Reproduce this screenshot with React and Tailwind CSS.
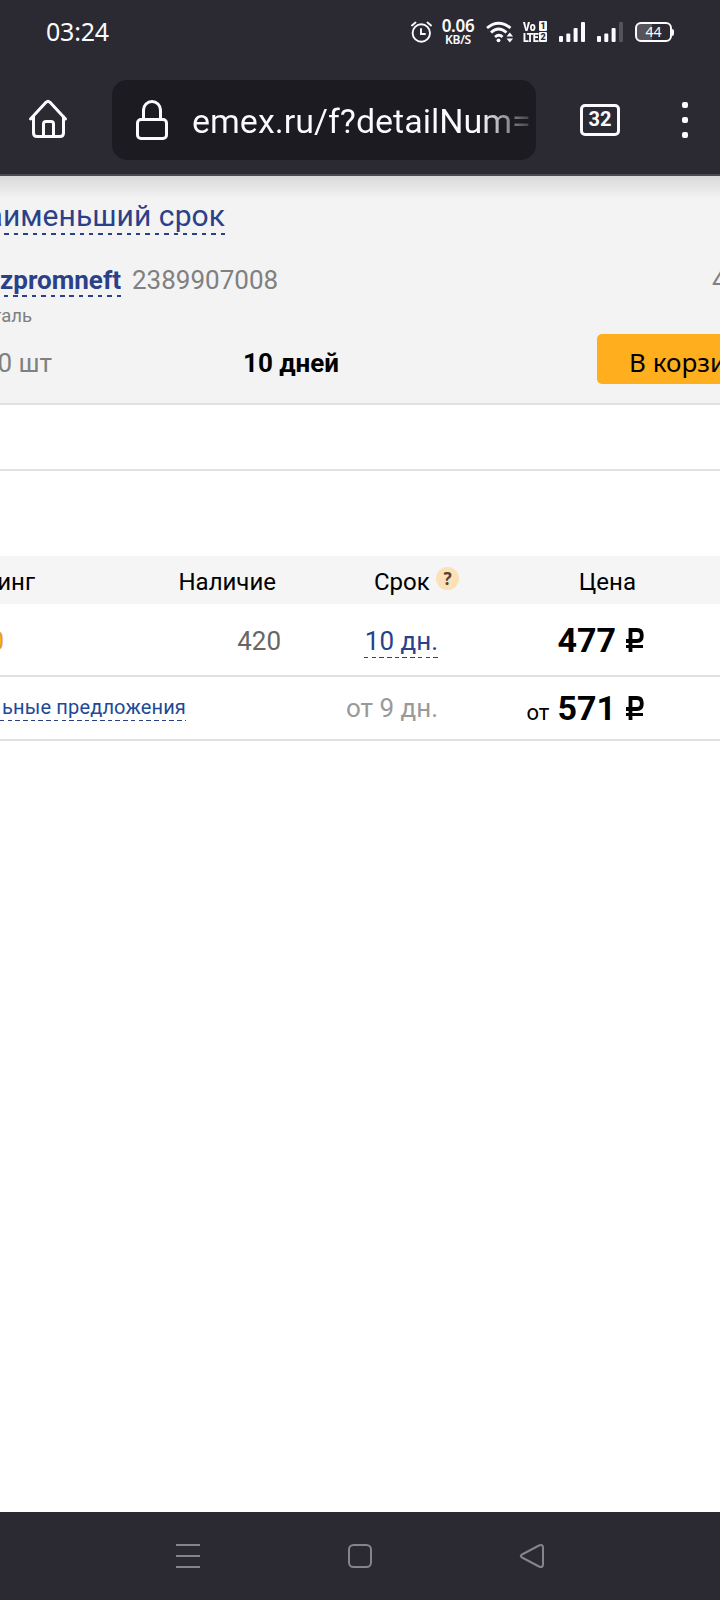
import React from "react";

const Bars = ({ weak }) => (
  <svg width="28" height="24" viewBox="0 0 28 24" fill="#fbfbfe">
    <rect x="0" y="16" width="4" height="6" rx="1" />
    <rect x="7.3" y="13.500" width="4" height="8.500" rx="1" />
    <rect x="14.6" y="8" width="4" height="14" rx="1" />
    <rect x="22" y="2" width="4" height="20" rx="1" opacity={weak ? 0.2 : 1} />
  </svg>
);

const StatusBar = () => (
  <div className="flex h-16 text-[#fbfbfe]">
    <div className="w-[411px] pl-[46px] pt-[15px] font-['Noto_Sans',sans-serif] text-[25px] leading-8 tracking-[-0.2px]">
      03:24
    </div>
    <svg className="mt-[21px]" width="21" height="22" viewBox="0 0 21 22" fill="none" stroke="currentColor" strokeWidth="1.9" strokeLinecap="round">
      <circle cx="10.3" cy="12" r="8.7" />
      <path d="M10 8v5h4M1 4.5l3.5-3M20 4.5l-3.5-3" />
    </svg>
    <div className="ml-2 mt-[17px] w-[36px] text-center font-['Noto_Sans',sans-serif] font-semibold">
      <div className="text-[17px] leading-[18px] tracking-[-0.3px]">0.06</div>
      <div className="-mt-px whitespace-nowrap text-[12px] leading-[12px] tracking-[-0.3px]">KB/S</div>
    </div>
    <svg className="ml-[10px] mt-5" width="30" height="24" viewBox="0 0 30 24" fill="none" stroke="currentColor" strokeWidth="2.8">
      <path d="M1 8q11.500-9.500 23.500 0M5 12.500q7.500-7 15.500 0M9 17q4-3.500 7.500 0" />
      <circle cx="12.5" cy="20.300" r="1.9" fill="currentColor" stroke="none" />
      <path d="M20.500 16.500l3.300-4 3.300 4zM20.500 18.500l3.300 4 3.300-4z" fill="currentColor" stroke="none" />
    </svg>
    <div className="ml-[7px] mt-[21px] flex w-6 justify-between font-['Roboto',sans-serif] font-black">
      <div className="w-[15px] origin-left scale-x-[0.78] text-[13.5px] leading-[11px]">
        <div>Vo</div>
        <div className="tracking-[-1px]">LTE</div>
      </div>
      <div className="w-[8px] text-center text-[9px] leading-[10px] text-[#2b2a33]">
        <div className="rounded-[1px] bg-[#fbfbfe]">1</div>
        <div className="mt-px rounded-[1px] bg-[#fbfbfe]">2</div>
      </div>
    </div>
    <div className="ml-3 mt-5 flex gap-[10px]">
      <Bars />
      <Bars weak />
    </div>
    <div className="ml-[10px] mt-[22px] flex h-5 items-center">
      <div className="h-5 w-[37px] rounded-[6px] border-2 border-[#fbfbfe] bg-linear-to-r from-[#55545c] from-44% to-[#2b2a33] to-44% text-center font-['Noto_Sans',sans-serif] text-[14px] leading-4">
        44
      </div>
      <div className="h-[7px] w-[2px] rounded-r bg-[#fbfbfe]" />
    </div>
  </div>
);

const Toolbar = () => (
  <div className="flex h-[110px] pt-4 text-[#fbfbfe]">
    <svg className="ml-7 mt-[17px]" width="40" height="44" viewBox="0 0 40 44" fill="none" stroke="currentColor" strokeWidth="3" strokeLinecap="round" strokeLinejoin="round">
      <path d="M2.5 22L18 5.3q2-2 4 0L37.500 22M5.500 19.500V36q0 3.500 3.500 3.500h23q3.500 0 3.500-3.500V19.500M15.500 39V27q0-2.500 2.500-2.500h5q2.500 0 2.500 2.500v12" />
    </svg>
    <div className="ml-11 flex h-20 w-[424px] overflow-hidden rounded-[15px] bg-[#1c1b22]">
      <svg className="ml-6 mt-5" width="32" height="40" viewBox="0 0 32 40" fill="none" stroke="currentColor" strokeWidth="3">
        <rect x="1.500" y="19.500" width="29" height="19" rx="3.500" />
        <path d="M7.500 19V10a8.500 8.500 0 0 1 17 0v9" />
      </svg>
      <div className="ml-6 mt-4 w-[344px] whitespace-nowrap bg-linear-to-r from-[#fbfbfe] from-84% to-[#2f2e35] bg-clip-text font-['Roboto',sans-serif] text-[34px] leading-[50px] text-transparent">
        emex.ru/f?detailNum=
      </div>
    </div>
    <div className="ml-11 mt-6 h-8 w-10 rounded-[5px] border-[3px] border-[#fbfbfe] text-center font-['Roboto',sans-serif] text-[20px] font-bold leading-[25px]">
      32
    </div>
    <div className="ml-[62px] mt-[22px] flex flex-col gap-[9px]">
      <div className="size-1.5 rounded-[2px] bg-[#fbfbfe]" />
      <div className="size-1.5 rounded-[2px] bg-[#fbfbfe]" />
      <div className="size-1.5 rounded-[2px] bg-[#fbfbfe]" />
    </div>
  </div>
);

const Dashes = () => (
  <div className="h-[2px] bg-[repeating-linear-gradient(to_left,#2a4189_0_4.500px,transparent_4.500px_9.400px)]" />
);

const ThinDashes = () => (
  <div className="h-px bg-[repeating-linear-gradient(to_right,#2a4189_0_4.500px,transparent_4.500px_7.700px)]" />
);

const BestOffer = () => (
  <div className="h-[229px] overflow-hidden border-b-2 border-[#e1e1e1] bg-linear-to-b from-[#d9d9d9] to-[#f3f3f3] to-10% whitespace-nowrap text-[26px] text-[#808080]">
    <div className="h-[59px] w-[225px] text-[#2a4189]">
      <div className="flex h-[57px] justify-end pt-[22px] text-[30px] leading-9 tracking-[0.06px]">аименьший срок</div>
      <Dashes />
    </div>
    <div className="flex h-[62px] leading-8">
      <div className="w-[121px] text-[#2a4189]">
        <div className="flex h-[60px] justify-end pt-[29px] font-bold">zpromneft</div>
        <Dashes />
      </div>
      <div className="ml-[11px] w-[580px] pt-[29px]">2389907008</div>
      <div className="w-2 pt-[29px]">4</div>
    </div>
    <div className="flex h-[36px] w-8 justify-end pt-[7px] text-[18.5px] leading-6">таль</div>
    <div className="flex h-[51px] pt-px">
      <div className="flex w-[52px] shrink-0 justify-end pt-[13px] leading-8">0 шт</div>
      <div className="ml-[191px] w-[354px] shrink-0 pt-[13px] font-bold leading-8 text-black">10 дней</div>
      <div className="h-[50px] w-[180px] shrink-0 rounded-[5px] bg-[#ffae1d] pl-8 font-['Noto_Sans',sans-serif] leading-[57px] text-black">
        В корзину
      </div>
    </div>
  </div>
);

const Rouble = () => (
  <svg width="18" height="24" viewBox="0 0 18 24" fill="none" stroke="black" strokeWidth="3.800">
    <path d="M4.500 24V2h6.500q4.800 0 4.800 5.500T11 13H0" />
    <path d="M0 18.500h17" strokeWidth="3" />
  </svg>
);

const Price = ({ from, value }) => (
  <div className="flex w-[206px] items-baseline justify-end text-black">
    {from && <span className="mr-2 text-[22px]">{from}</span>}
    <span className="mr-2.5 text-[34px] font-bold">{value}</span>
    <Rouble />
  </div>
);

const OffersTable = () => (
  <div className="mt-[85px] overflow-hidden whitespace-nowrap text-[26px]">
    <div className="flex h-12 items-center bg-[#f5f5f5] pt-[3px] text-[24px] text-black">
      <div className="flex w-[35px] justify-end">инг</div>
      <div className="w-[241px] text-right">Наличие</div>
      <div className="ml-[98px] w-[56px]">Срок</div>
      <div className="mb-1.5 ml-1.5 size-[23px] rounded-full bg-[#fbe0b8] text-center font-['Noto_Sans',sans-serif] text-[17px] font-bold leading-[23px] text-[#4d4535]">
        ?
      </div>
      <div className="w-[177px] text-right">Цена</div>
    </div>
    <div className="flex h-[73px] items-center border-b-2 border-[#e1e1e1]">
      <div className="flex w-1 justify-end pt-1 text-[#e5a01a]">0</div>
      <div className="w-[277px] pt-1 text-right text-[#666666]">420</div>
      <div className="ml-[83px] w-[74px] pt-1 text-[#2a4189]">
        <div className="h-[31px] text-right leading-[30px]">10 дн.</div>
        <ThinDashes />
      </div>
      <div className="pt-0.5">
        <Price value="477" />
      </div>
    </div>
    <div className="flex h-16 items-center border-b-2 border-[#e1e1e1]">
      <div className="w-[186px] text-[20px] leading-6 tracking-[0.15px] text-[#1c4a96]">
        <div className="flex h-[25px] justify-end">ьные предложения</div>
        <ThinDashes />
      </div>
      <div className="w-[252px] text-right text-[#999999]">от 9 дн.</div>
      <Price from="от" value="571" />
    </div>
  </div>
);

const NavBar = () => (
  <div className="flex h-[88px] items-center bg-[#2b2a33] pl-44 text-[#85848c]">
    <svg width="368" height="24" viewBox="0 0 368 24" fill="none" stroke="currentColor" strokeWidth="2" strokeLinejoin="round">
      <path d="M0 1h24M0 12h24M0 23h24" />
      <rect x="173" y="1" width="22" height="22" rx="4.500" />
      <path d="M346 10.500L363 1.500q4-1.500 4 2v17q0 3.500-4 2L346 13.500q-2.500-1.500 0-3z" />
    </svg>
  </div>
);

const App = () => {
  return (
    <div className="flex h-[1600px] w-[720px] flex-col overflow-hidden bg-white font-['Roboto',sans-serif]">
      <header className="h-[176px] border-b-2 border-[#4a4952] bg-[#2b2a33]">
        <StatusBar />
        <Toolbar />
      </header>
      <main className="flex-1">
        <BestOffer />
        <div className="h-[66px] border-b-2 border-[#e1e1e1]" />
        <OffersTable />
      </main>
      <NavBar />
    </div>
  );
};

export default App;
